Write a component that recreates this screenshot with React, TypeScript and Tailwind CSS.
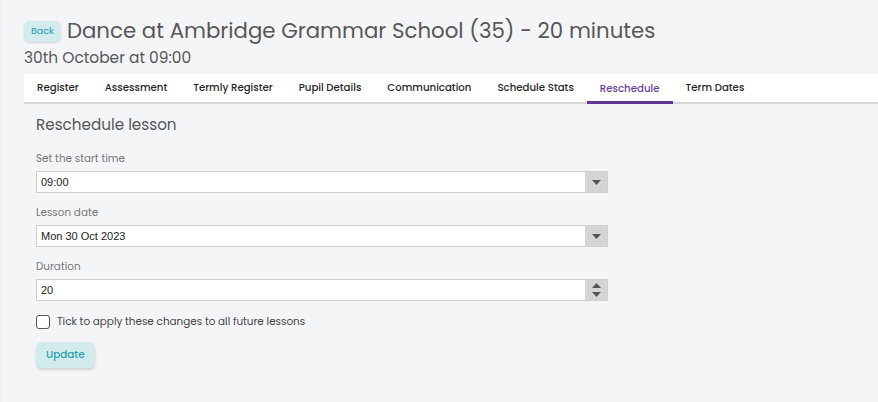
import React from "react";

const tabs = [
  "Register",
  "Assessment",
  "Termly Register",
  "Pupil Details",
  "Communication",
  "Schedule Stats",
  "Reschedule",
  "Term Dates",
];

const sans = "font-['Poppins','Open_Sans',sans-serif]";

function Caret({ up = false }: { up?: boolean }) {
  return (
    <svg width="9" height="5" viewBox="0 0 9 5" className={up ? "rotate-180" : ""}>
      <path d="M0 0h9L4.5 5z" fill="#555" />
    </svg>
  );
}

function Field({ label, value, spinner = false }: { label: string; value: string; spinner?: boolean }) {
  return (
    <div className="mb-[13px]">
      <div className="text-[10.4px] leading-[14px] text-[#777] mb-[5px]">{label}</div>
      <div className="flex h-[22px] w-[572px] border border-[#cfcfcf] bg-white">
        <div className="flex-1 flex items-center pl-[4px] text-[11px] text-[#222] font-['Liberation_Sans',Arial,sans-serif]">
          {value}
        </div>
        <div className="w-[22px] bg-[#d4d4d4] flex flex-col items-center justify-center gap-[4px]">
          {spinner && <Caret up />}
          <Caret />
        </div>
      </div>
    </div>
  );
}

export default function App() {
  return (
    <div className={`${sans} w-[878px] h-[402px] bg-[#f4f5f7] border-l-[3px] border-[#eeeff1] pl-[21px] overflow-hidden`}>
      {/* page header */}
      <div className="flex items-center pt-[16px]">
        <button className="h-[21px] px-[7px] rounded-[6px] bg-[#d2ecee] text-[#2a9db0] text-[9.5px] shadow-[0_1px_2px_rgba(0,0,0,0.15)]">
          Back
        </button>
        <h1 className="ml-[6px] text-[21.3px] leading-[30px] text-[#575757]">
          Dance at Ambridge Grammar School (35) - 20 minutes
        </h1>
      </div>
      <div className="text-[15.4px] leading-[22px] text-[#575757] mt-[1px]">30th October at 09:00</div>

      {/* tabs */}
      <div className="mt-[5px] flex h-[30px] bg-white border-b-2 border-[#d6d6d8]">
        {tabs.map((t) => (
          <div
            key={t}
            className={`px-[13px] flex items-center text-[10.2px] font-medium ${
              t === "Reschedule" ? "text-[#6a3f9c] border-b-[3px] border-[#5f3596] -mb-[2px] pt-[3px]" : "text-[#262626]"
            }`}
          >
            {t}
          </div>
        ))}
      </div>

      {/* reschedule form */}
      <div className="px-[12px]">
        <h2 className="mt-[10px] text-[15.2px] leading-[22px] text-[#575757]">Reschedule lesson</h2>
        <div className="mt-[16px]">
          <Field label="Set the start time" value="09:00" />
          <Field label="Lesson date" value="Mon 30 Oct 2023" />
          <Field label="Duration" value="20" spinner />
        </div>
        <label className="flex items-center gap-[7px] text-[10.4px] text-[#444]">
          <span className="w-[14px] h-[14px] rounded-[3px] border border-[#555] bg-white" />
          Tick to apply these changes to all future lessons
        </label>
        <button className="mt-[12px] h-[26px] px-[10px] rounded-[6px] bg-[#d2ecee] text-[#2a9db0] text-[10.4px] font-medium shadow-[0_2px_3px_rgba(0,0,0,0.15)]">
          Update
        </button>
      </div>
    </div>
  );
}
